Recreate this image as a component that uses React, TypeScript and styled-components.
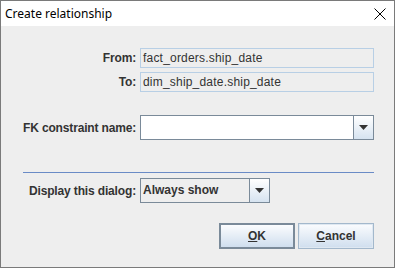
import React from 'react'
import styled, { createGlobalStyle } from 'styled-components'

const Global = createGlobalStyle`
  html, body {
    margin: 0;
    padding: 0;
    background: #ffffff;
  }
  * {
    box-sizing: border-box;
  }
`

const Window = styled.div`
  width: 395px;
  height: 268px;
  border: 1px solid #7a7a7a;
  display: flex;
  flex-direction: column;
  font-family: 'Liberation Sans', Arial, sans-serif;
  color: #333333;
`

const TitleBar = styled.div`
  height: 25px;
  background: #ffffff;
  display: flex;
  align-items: center;
  justify-content: space-between;
  padding: 0 8px 0 4px;
`

const Title = styled.span`
  font-family: 'Noto Sans', 'Open Sans', sans-serif;
  font-size: 12px;
  color: #000000;
  margin-top: -1px;
`

const Body = styled.div`
  flex: 1;
  background: #eeeeee;
  padding: 22px 20px 0 22px;
  display: flex;
  flex-direction: column;
`

const Grid = styled.div<{ $top?: number }>`
  display: grid;
  grid-template-columns: 114px 1fr;
  column-gap: 3px;
  row-gap: 4px;
  align-items: center;
  margin-top: ${p => p.$top ?? 0}px;
`

const Label = styled.label`
  font-size: 12px;
  font-weight: bold;
  letter-spacing: -0.15px;
  text-align: right;
  white-space: nowrap;
  padding-right: 1px;
`

const ReadField = styled.div`
  height: 20px;
  border: 1px solid #b8cfe5;
  background: #eeeeee;
  font-size: 12px;
  letter-spacing: 0.2px;
  line-height: 18px;
  padding-left: 2px;
  white-space: nowrap;
`

const Combo = styled.div<{ $width?: number; $editable?: boolean }>`
  height: 25px;
  width: ${p => (p.$width ? `${p.$width}px` : 'auto')};
  display: flex;
  border: 1px solid #7a8a99;
  background: ${p => (p.$editable ? '#ffffff' : '#eeeeee')};
`

const ComboText = styled.div`
  flex: 1;
  font-size: 12px;
  font-weight: bold;
  line-height: 23px;
  padding-left: 2px;
  white-space: nowrap;
`

const ArrowButton = styled.div`
  width: 20px;
  border-left: 1px solid #7a8a99;
  background: linear-gradient(#ffffff, #d6e3f0);
  display: flex;
  align-items: center;
  justify-content: center;
`

const Separator = styled.div`
  height: 1px;
  background: #6a8bc6;
  margin: 32px 0 5px 0;
`

const Buttons = styled.div`
  display: flex;
  justify-content: flex-end;
  gap: 3px;
  margin-top: 20px;
`

const Button = styled.button<{ $default?: boolean }>`
  width: 76px;
  height: 26px;
  font-family: 'Liberation Sans', Arial, sans-serif;
  font-size: 12px;
  font-weight: bold;
  color: #333333;
  background: linear-gradient(#fbfcfe, #cfdeee);
  border: ${p => (p.$default ? '2px solid #7a8a99' : '1px solid #a3b8cc')};
  box-shadow: ${p => (p.$default ? 'none' : 'inset 0 0 0 1px #dfe8f1')};
  padding: 0;
  u {
    text-decoration: underline;
  }
`

const Arrow = () => (
  <svg width="9" height="5" viewBox="0 0 9 5">
    <polygon points="0,0 9,0 4.5,5" fill="#333333" />
  </svg>
)

const CloseIcon = () => (
  <svg width="12" height="12" viewBox="0 0 12 12">
    <path d="M0.5 0.5 L11.5 11.5 M11.5 0.5 L0.5 11.5" stroke="#000000" strokeWidth="1" />
  </svg>
)

export default function App() {
  return (
    <>
      <Global />
      <Window>
        <TitleBar>
          <Title>Create relationship</Title>
          <CloseIcon />
        </TitleBar>
        <Body>
          <Grid>
            <Label>From:</Label>
            <ReadField>fact_orders.ship_date</ReadField>
            <Label>To:</Label>
            <ReadField>dim_ship_date.ship_date</ReadField>
          </Grid>
          <Grid $top={23}>
            <Label>FK constraint name:</Label>
            <Combo $editable>
              <ComboText />
              <ArrowButton>
                <Arrow />
              </ArrowButton>
            </Combo>
          </Grid>
          <Separator />
          <Grid>
            <Label>Display this dialog:</Label>
            <Combo $width={130}>
              <ComboText>Always show</ComboText>
              <ArrowButton>
                <Arrow />
              </ArrowButton>
            </Combo>
          </Grid>
          <Buttons>
            <Button $default>
              <u>O</u>K
            </Button>
            <Button>
              <u>C</u>ancel
            </Button>
          </Buttons>
        </Body>
      </Window>
    </>
  )
}
